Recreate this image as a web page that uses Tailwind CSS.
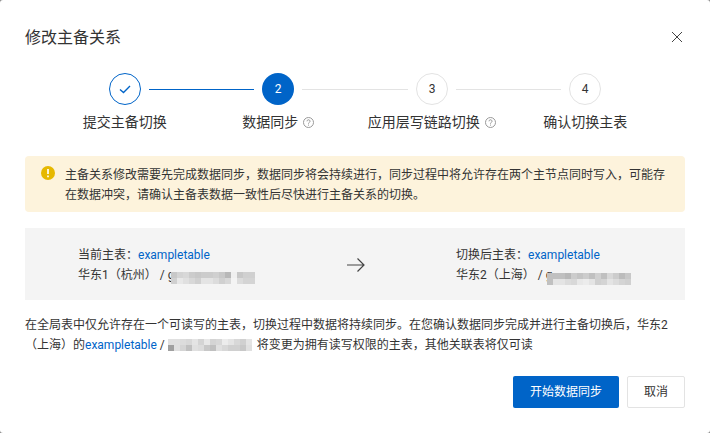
<!DOCTYPE html>
<html lang="zh-CN">
<head>
    <meta charset="UTF-8">
    <title>修改主备关系</title>
    <script src="https://cdn.jsdelivr.net/npm/@tailwindcss/browser@4"></script>
</head>
<body class="w-[710px] h-[433px] overflow-hidden bg-[#8a8a8a] text-[#333] font-['Roboto','Noto_Sans_CJK_SC',sans-serif]">
    <div class="h-[433px] bg-white rounded-[3px] px-[25px]">
        <!-- Header -->
        <div class="flex items-center justify-between h-[74px]">
            <h1 class="text-[16px] text-[#333] mt-[2px]">修改主备关系</h1>
            <svg class="w-[14px] h-[14px] mr-[1px] text-[#444]" viewBox="0 0 14 14" fill="none" stroke="currentColor" stroke-width="1"><path d="M2 2l10 10M12 2L2 12"/></svg>
        </div>

        <!-- Steps -->
        <div class="flex items-center pl-[84px] h-[32px] mt-[-1px]">
            <div class="w-8 h-8 rounded-full border border-[#0064c8] flex items-center justify-center">
                <svg class="w-[14px] h-[14px] text-[#0064c8]" viewBox="0 0 14 14" fill="none" stroke="currentColor" stroke-width="1.4"><path d="M2 7.500l3.500 3L12 4"/></svg>
            </div>
            <div class="w-[105px] h-px bg-[#0064c8] mx-2"></div>
            <div class="w-8 h-8 rounded-full bg-[#0064c8] text-white text-[12px] flex items-center justify-center">2</div>
            <div class="w-[106px] h-px bg-[#e3e3e3] mx-2"></div>
            <div class="w-8 h-8 rounded-full border border-[#e3e3e3] text-[12px] flex items-center justify-center">3</div>
            <div class="w-[105px] h-px bg-[#e3e3e3] mx-2"></div>
            <div class="w-8 h-8 rounded-full border border-[#e3e3e3] text-[12px] flex items-center justify-center">4</div>
        </div>
        <div class="grid grid-cols-4 w-[614px] ml-[23px] mt-[7px] h-[20px] text-[14px] leading-[20px] text-center">
            <div>提交主备切换</div>
            <div class="flex items-center justify-center gap-[5px]">数据同步
                <svg class="w-[11px] h-[11px] text-[#999]" viewBox="0 0 11 11" fill="none" stroke="currentColor"><circle cx="5.500" cy="5.500" r="5"/><path d="M4 4.300a1.500 1.500 0 1 1 2.200 1.300c-.5.3-.7.5-.7 1.100M5.500 7.600v1"/></svg>
            </div>
            <div class="flex items-center justify-center gap-[5px]">应用层写链路切换
                <svg class="w-[11px] h-[11px] text-[#999]" viewBox="0 0 11 11" fill="none" stroke="currentColor"><circle cx="5.500" cy="5.500" r="5"/><path d="M4 4.300a1.500 1.500 0 1 1 2.200 1.300c-.5.3-.7.5-.7 1.100M5.500 7.600v1"/></svg>
            </div>
            <div>确认切换主表</div>
        </div>

        <!-- Warning -->
        <div class="flex mt-[24px] h-[56px] rounded bg-[#fdf3dc] pl-[16px] pr-[16px] pt-[9px] text-[12px] leading-[20px]">
            <svg class="w-[14px] h-[14px] mt-[1px] mr-[10px] shrink-0" viewBox="0 0 14 14"><circle cx="7" cy="7" r="7" fill="#e6b800"/><path d="M7 3v5M7 9.600v1.600" stroke="#fff" stroke-width="1.700"/></svg>
            <p>主备关系修改需要先完成数据同步，数据同步将会持续进行，同步过程中将允许存在两个主节点同时写入，可能存在数据冲突，请确认主备表数据一致性后尽快进行主备关系的切换。</p>
        </div>

        <!-- Switch panel -->
        <div class="flex items-center h-[72px] mt-[16px] bg-[#f4f4f4] pl-[53px] pt-[2px] text-[12px] leading-[20px]">
            <div class="w-[268px]">
                <div>当前主表：<span class="text-[#0064c8]">exampletable</span></div>
                <div class="flex items-center">华东1（杭州） / g
                    <span class="mosaic grid grid-cols-[repeat(14,6px)] auto-rows-[6px] ml-[-3px] mt-[6px]" data-cells="c8 d4 d8 cc c8 cc cc d0 c8 b8 f0 c8 d0 d0 d0 e8 e0 d8 d0 e4 e4 dc d0 d8 f4 dc d4 d4"></span>
                </div>
            </div>
            <svg class="w-[20px] h-[16px] text-[#444] mr-[90px]" viewBox="0 0 20 16" fill="none" stroke="currentColor" stroke-width="1.200"><path d="M1 8h17M11.500 1.500L18 8l-6.500 6.500"/></svg>
            <div>
                <div>切换后主表：<span class="text-[#0064c8]">exampletable</span></div>
                <div class="flex items-center">华东2（上海） / g
                    <span class="mosaic grid grid-cols-[repeat(14,6px)] auto-rows-[6px] ml-[-5px] mt-[8px]" data-cells="c0 c0 c0 b8 cc c4 cc c0 d0 c0 d8 cc bc c8 c0 e4 e4 dc d8 e8 ec e4 d0 d4 e4 dc d4 d0"></span>
                </div>
            </div>
        </div>

        <!-- Description -->
        <p class="mt-[15px] text-[12px] leading-[20px]">在全局表中仅允许存在一个可读写的主表，切换过程中数据将持续同步。在您确认数据同步完成并进行主备切换后，华东2（上海）的<span class="text-[#0064c8]">exampletable</span> / <span class="mosaic inline-grid grid-cols-[repeat(14,6px)] auto-rows-[6px] align-top mt-[4px] mb-[-4px] mr-[2px]" data-cells="e0 e0 dc d8 e4 d4 e8 d4 d8 ec e4 d8 d0 e4 a0 e0 d4 c0 e0 dc c8 c0 e0 d8 d0 d0 c8 e0"></span> 将变更为拥有读写权限的主表，其他关联表将仅可读</p>

        <!-- Footer -->
        <div class="flex justify-end gap-2 mt-[21px] text-[12px]">
            <button class="w-[106px] h-8 bg-[#0064c8] text-white rounded-[2px]">开始数据同步</button>
            <button class="w-[58px] h-8 bg-white border border-[#e3e3e3] rounded-[2px]">取消</button>
        </div>
    </div>
    <script>
        // blurred instance names, one grey per mosaic cell
        document.querySelectorAll('.mosaic').forEach(function (el) {
            el.dataset.cells.split(' ').forEach(function (c) {
                var cell = document.createElement('span');
                cell.style.background = '#' + c + c + c;
                el.appendChild(cell);
            });
        });
    </script>
</body>
</html>
